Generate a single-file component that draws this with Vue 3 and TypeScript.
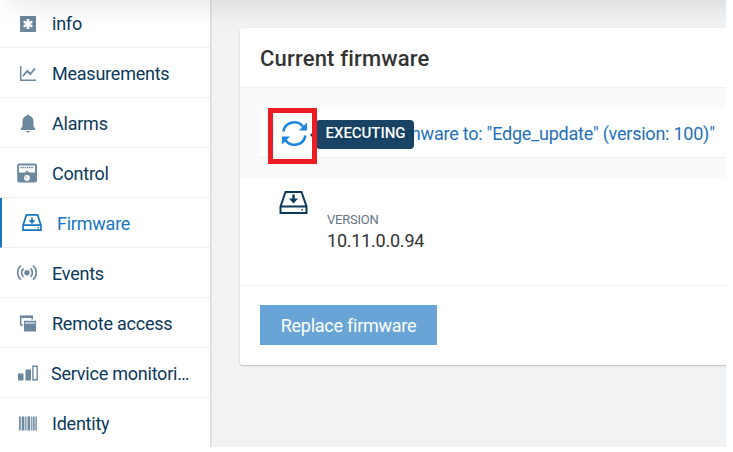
<script setup lang="ts">
interface NavItem {
  id: string
  label: string
}

const items: NavItem[] = [
  { id: 'info', label: 'info' },
  { id: 'measurements', label: 'Measurements' },
  { id: 'alarms', label: 'Alarms' },
  { id: 'control', label: 'Control' },
  { id: 'firmware', label: 'Firmware' },
  { id: 'events', label: 'Events' },
  { id: 'remote', label: 'Remote access' },
  { id: 'service', label: 'Service monitoring' },
  { id: 'identity', label: 'Identity' },
]
const activeId = 'firmware'
</script>

<template>
  <div class="page">
    <nav class="sidebar">
      <a v-for="item in items" :key="item.id" class="nav-item" :class="[item.id, { active: item.id === activeId }]">
        <svg v-if="item.id === 'info'" class="icon" viewBox="0 0 20 20">
          <path fill="currentColor" d="M3 2h16v16H3z" />
          <path stroke="#fff" stroke-width="2.6" d="M11 5v10M6.700 7.500l8.600 5M15.300 7.500l-8.600 5" />
        </svg>
        <svg v-else-if="item.id === 'measurements'" class="icon" viewBox="0 0 20 20" fill="none" stroke="currentColor">
          <path stroke-width="1.500" d="M3.700 3v14.300H19" />
          <path stroke-width="1.900" d="M6 13l4.300-5 3 3L18 5.500" />
        </svg>
        <svg v-else-if="item.id === 'alarms'" class="icon" viewBox="0 0 20 20" fill="currentColor">
          <path d="M11 1.500c-.9 0-1.300.6-1.300 1.300C6.800 3.500 5.500 5.700 5.500 8.500V13L3.700 16v1h14.600v-1l-1.800-3V8.500c0-2.800-1.300-5-4.200-5.700C12.300 2.100 11.900 1.500 11 1.500zM9 18h4c0 .9-.9 1.500-2 1.500s-2-.6-2-1.500z" />
        </svg>
        <svg v-else-if="item.id === 'control'" class="icon" viewBox="0 0 20 20">
          <rect x="0.200" y="0.500" width="19.800" height="19" rx="2" fill="currentColor" />
          <path fill="#fff" d="M2 2.500h16v7h-6L10 7.500 8 9.500H2z" />
          <path stroke="currentColor" stroke-width="1.500" stroke-dasharray="1.5 .7" d="M3.300 4.500h13.400" />
          <circle cx="10" cy="15" r="2.900" fill="#fff" />
          <path stroke="currentColor" d="M10 15L8.500 13.500" />
        </svg>
        <svg v-else-if="item.id === 'firmware'" class="icon" viewBox="0 0 20 20" fill="none" stroke="currentColor" stroke-width="1.700">
          <path d="M1 12.500L4.400 1.900h11.200L19 12.500v4.700H1zM1 12.200h18" />
          <path d="M10 4.500v4" />
          <path fill="currentColor" stroke="none" d="M6.500 7.300h7L10 11zM15.500 14H17v1.500h-1.500z" />
        </svg>
        <svg v-else-if="item.id === 'events'" class="icon" viewBox="0 0 20 20" fill="none" stroke="currentColor" stroke-width="1.700">
          <circle cx="10" cy="9.700" r="2.700" fill="currentColor" stroke="none" />
          <path d="M6.500 5.500a5.600 5.600 0 0 0 0 8.400M13.500 5.500a5.600 5.600 0 0 1 0 8.400M4 2.700a9 9 0 0 0 0 14M16 2.700a9 9 0 0 1 0 14" />
        </svg>
        <svg v-else-if="item.id === 'remote'" class="icon" viewBox="0 0 20 20">
          <path fill="none" stroke="currentColor" stroke-width="1.500" d="M15.200 6.500V3.500H3.700v8.400H6" />
          <path fill="currentColor" d="M3 2.500h13V5H3zM7 7.800h12v10.700H7z" />
          <path stroke="#fff" d="M8 10h10" />
        </svg>
        <svg v-else-if="item.id === 'service'" class="icon" viewBox="0 0 20 20">
          <path fill="currentColor" d="M0 10.500h5.500v7H0zM7.500 6.500H13v11H7.500z" />
          <path fill="none" stroke="currentColor" stroke-width="1.400" d="M14.900 3.200h4.300v13.600h-4.300z" />
        </svg>
        <svg v-else class="icon" viewBox="0 0 20 20" fill="currentColor">
          <path d="M2 3.500h1.700v14H2zM4.700 3.500h2.700v14H4.700zM8.300 3.500h1.200v14H8.300zM10.500 3.500h2.700v14h-2.700zM14.200 3.500h1.200v14h-1.200zM16.100 3.500h1.500v14h-1.500zM18.400 3.500h1.400v14h-1.400z" />
        </svg>
        <span class="label">{{ item.label }}</span>
      </a>
    </nav>

    <main class="content">
      <section class="card">
        <header class="card-header">Current firmware</header>
        <div class="operation">
          <div class="operation-row">
            <span class="status">
              <svg class="sync" viewBox="0 0 28 28" fill="none" stroke="currentColor" stroke-width="2.500">
                <path d="M3.400 12.500A11 11 0 0 1 23.700 8.600M25.400 16.500A11 11 0 0 1 5.100 20.400" />
                <path fill="currentColor" stroke="none" d="M27 3.500v8h-8zM2 25.500v-8h8z" />
              </svg>
              <span class="tooltip">EXECUTING</span>
              <span class="highlight"></span>
            </span>
            <a class="operation-link">Update firmware to: "Edge_update" (version: 100)"</a>
          </div>
        </div>
        <div class="version">
          <svg class="drive" viewBox="0 0 30 26" fill="none" stroke="currentColor" stroke-width="2">
            <path d="M1.500 16.500L6.500 2h16l5 14.500V23h-26zM1.500 16.500h26" />
            <path d="M14.500 4.500V10" stroke-width="2.400" />
            <path fill="currentColor" stroke="none" d="M10 8.500h9L14.500 13.500zM22.500 19H24v1.500h-1.500z" />
          </svg>
          <div class="version-text">
            <span class="caption">VERSION</span>
            <span class="value">10.11.0.0.94</span>
          </div>
        </div>
        <footer class="card-footer">
          <button class="replace" type="button">Replace firmware</button>
        </footer>
      </section>
    </main>
    <div class="top-shadow"></div>
  </div>
</template>

<style>
body {
  background: #fff;
}
</style>

<style scoped>
* {
  box-sizing: border-box;
}
.page {
  position: relative;
  display: flex;
  width: 726px;
  height: 447px;
  overflow: hidden;
  font-family: Roboto, sans-serif;
  font-size: 18px;
  letter-spacing: -0.23px;
  background: #f0f2f4;
}
.sidebar {
  flex: none;
  width: 211px;
  background: #fff;
  border-right: 1px solid #d9dcde;
  box-shadow: 1px 0 1px rgba(0, 0, 0, 0.04);
}
.nav-item {
  display: flex;
  align-items: center;
  height: 50px;
  padding: 0 20px 0 17px;
  border-bottom: 1px solid #eeefef;
  color: #0b385b;
}
.nav-item.info {
  height: 48px;
}
.nav-item.active {
  padding-left: 20px;
  border-left: 2px solid #1776bf;
  color: #1776bf;
}
.icon {
  flex: none;
  width: 20px;
  height: 20px;
  margin-right: 15px;
  color: #6b889f;
}
.active .icon {
  color: #1776bf;
}
.service .icon {
  margin-left: 1px;
  margin-right: 13px;
}
.label {
  min-width: 0;
  overflow: hidden;
  text-overflow: ellipsis;
  white-space: nowrap;
  padding-top: 2px;
  line-height: 26px;
}
.info .label {
  padding-top: 0;
}
.content {
  flex: 1;
  min-width: 0;
  padding: 28px 0 0 29px;
}
.card {
  width: 500px;
  height: 337px;
  background: #fff;
  border-radius: 3px;
  box-shadow: 0 1px 2px rgba(0, 0, 0, 0.22);
}
.card-header {
  height: 60px;
  padding-left: 20px;
  border-bottom: 1px solid #eeefef;
  font-size: 22px;
  font-weight: 500;
  letter-spacing: 0.18px;
  line-height: 62px;
  color: #333;
}
.operation {
  height: 90px;
  padding: 20px 0 20px 20px;
  background: #fafafa;
}
.operation-row {
  display: flex;
  align-items: center;
  height: 50px;
  padding-left: 20px;
  background: #fff;
  border-bottom: 1px solid #eeefef;
}
.status {
  position: relative;
  width: 28px;
  height: 28px;
  margin-right: 21px;
}
.sync {
  display: block;
  width: 28px;
  height: 28px;
  color: #1b86e0;
}
.tooltip {
  position: absolute;
  left: 36px;
  top: 1px;
  width: 98px;
  height: 29px;
  padding-left: 1px;
  border-radius: 4px;
  background: rgba(11, 56, 91, 0.94);
  color: #fff;
  font-size: 15px;
  font-weight: 500;
  letter-spacing: -0.05px;
  line-height: 27px;
  text-align: center;
}
.tooltip::before {
  content: '';
  position: absolute;
  left: -6px;
  top: 9px;
  border: solid transparent;
  border-width: 6px 6px 6px 0;
  border-right-color: #0b385b;
}
.highlight {
  position: absolute;
  left: -12px;
  top: -11px;
  width: 49px;
  height: 56px;
  border: 5px solid #ed1c24;
}
.operation-link {
  padding-top: 2px;
  color: #2470b8;
  white-space: nowrap;
}
.version {
  display: flex;
  height: 108px;
  padding: 12px 0 0 39px;
  border-bottom: 1px solid #eeefef;
}
.drive {
  width: 30px;
  height: 26px;
  margin-right: 18px;
  color: #0b385b;
}
.version-text {
  display: flex;
  flex-direction: column;
  padding-top: 21px;
}
.caption {
  font-size: 13px;
  line-height: 18px;
  color: #66757f;
}
.value {
  line-height: 24px;
  color: #333;
}
.card-footer {
  padding: 19px 20px 20px;
}
.replace {
  display: block;
  width: 177px;
  height: 40px;
  padding: 2px 0 0;
  border: 0;
  background: #68a5d6;
  color: #fff;
  font: 18px/38px Roboto, sans-serif;
  letter-spacing: -0.25px;
}
.top-shadow {
  position: absolute;
  top: -20px;
  left: 10px;
  right: -40px;
  height: 20px;
  box-shadow: 0 0 30px rgba(0, 0, 0, 0.16);
}
</style>
